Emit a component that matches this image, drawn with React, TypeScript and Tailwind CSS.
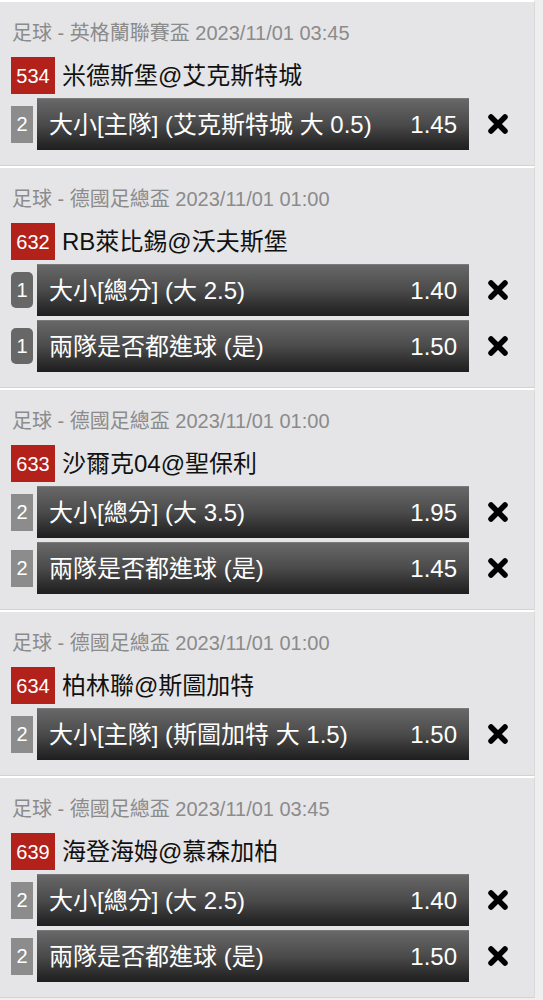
import React from "react";

interface Bet {
  seq: string;
  rounded?: boolean;
  label: string;
  odds: string;
}

interface Match {
  league: string;
  code: string;
  teams: string;
  bets: Bet[];
}

const matches: Match[] = [
  {
    league: "足球 - 英格蘭聯賽盃 2023/11/01 03:45",
    code: "534",
    teams: "米德斯堡@艾克斯特城",
    bets: [{ seq: "2", label: "大小[主隊] (艾克斯特城 大 0.5)", odds: "1.45" }],
  },
  {
    league: "足球 - 德國足總盃 2023/11/01 01:00",
    code: "632",
    teams: "RB萊比錫@沃夫斯堡",
    bets: [
      { seq: "1", rounded: true, label: "大小[總分] (大 2.5)", odds: "1.40" },
      { seq: "1", rounded: true, label: "兩隊是否都進球 (是)", odds: "1.50" },
    ],
  },
  {
    league: "足球 - 德國足總盃 2023/11/01 01:00",
    code: "633",
    teams: "沙爾克04@聖保利",
    bets: [
      { seq: "2", label: "大小[總分] (大 3.5)", odds: "1.95" },
      { seq: "2", label: "兩隊是否都進球 (是)", odds: "1.45" },
    ],
  },
  {
    league: "足球 - 德國足總盃 2023/11/01 01:00",
    code: "634",
    teams: "柏林聯@斯圖加特",
    bets: [{ seq: "2", label: "大小[主隊] (斯圖加特 大 1.5)", odds: "1.50" }],
  },
  {
    league: "足球 - 德國足總盃 2023/11/01 03:45",
    code: "639",
    teams: "海登海姆@慕森加柏",
    bets: [
      { seq: "2", label: "大小[總分] (大 2.5)", odds: "1.40" },
      { seq: "2", label: "兩隊是否都進球 (是)", odds: "1.50" },
    ],
  },
];

function RemoveIcon() {
  return (
    <svg width="24" height="24" viewBox="0 0 24 24" className="shrink-0">
      <path
        d="M5 5 L19 19 M19 5 L5 19"
        stroke="#000"
        strokeWidth="5.5"
        strokeLinecap="round"
        fill="none"
      />
    </svg>
  );
}

function BetRow({ bet }: { bet: Bet }) {
  return (
    <div className="flex items-center">
      <div
        className={
          bet.rounded
            ? "flex h-[36px] w-[22px] items-center justify-center rounded-[5px] bg-[#676767] text-[20px] text-white"
            : "flex h-[37px] w-[22px] items-center justify-center bg-[#8c8c8c] text-[20px] text-white"
        }
      >
        {bet.seq}
      </div>
      <div className="ml-[4px] flex h-[52px] w-[432px] items-center justify-between border-t border-[#7a7a7a] bg-linear-to-b from-[#686868] via-[#4a4a4a] to-[#1e1e1e] pl-[12px] pr-[12px] text-[24px] text-white">
        <span>{bet.label}</span>
        <span>{bet.odds}</span>
      </div>
      <div className="ml-[17px]">
        <RemoveIcon />
      </div>
    </div>
  );
}

function MatchCard({ match }: { match: Match }) {
  return (
    <div className="w-[535px] border-t-2 border-b border-r border-t-white border-b-[#d2d2d2] border-r-[#dadada] bg-[#e5e5e7] pb-[15px] pl-[11px] pt-[19px]">
      <div className="h-[24px] pl-[1px] text-[20px] leading-[24px] text-[#8b8b8b]">
        {match.league}
      </div>
      <div className="mt-[12px] flex h-[37px] items-center">
        <div className="flex h-[37px] w-[44px] items-center justify-center bg-[#b2221b] text-[20px] text-white">
          {match.code}
        </div>
        <div className="ml-[7px] text-[24px] text-[#111]">{match.teams}</div>
      </div>
      <div className="mt-[4px] flex flex-col gap-[4px]">
        {match.bets.map((bet, i) => (
          <BetRow key={i} bet={bet} />
        ))}
      </div>
    </div>
  );
}

export default function App() {
  return (
    <div className="min-h-[1000px] w-[543px] overflow-hidden bg-[#efeff0] font-['Liberation_Sans','Noto_Sans_CJK_TC',sans-serif]">
      {matches.map((m) => (
        <MatchCard key={m.code} match={m} />
      ))}
    </div>
  );
}
